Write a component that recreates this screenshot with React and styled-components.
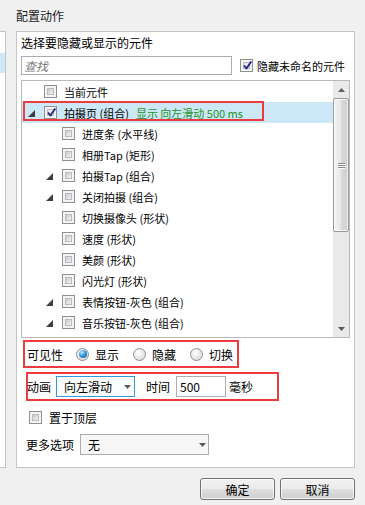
import React from 'react';
import styled, { createGlobalStyle, css } from 'styled-components';

const GlobalStyle = createGlobalStyle`
  html, body { margin: 0; padding: 0; background: #f0f0f0; }
  body {
    font-family: "Noto Sans CJK SC", "Noto Sans", "Liberation Sans", sans-serif;
    font-size: 12px;
    color: #000;
  }
  * { box-sizing: border-box; }
`;

const Page = styled.div`
  display: flex;
  width: 365px;
  height: 505px;
  overflow: hidden;
  background: #f0f0f0;
`;

const SideStrip = styled.div`
  flex: none;
  width: 6px;
  height: 437px;
  margin-top: 31px;
  background: #fff;
  border: 1px solid #c3c3c3;
  border-left: none;
  padding-top: 21px;
`;

const SideSelected = styled.div`
  height: 20px;
  background: #cde8f7;
`;

const Main = styled.div`
  flex: none;
  width: 339px;
  margin-left: 10px;
  display: flex;
  flex-direction: column;
`;

const Title = styled.div`
  height: 31px;
  display: flex;
  align-items: center;
  color: #1b1b1b;
`;

const Panel = styled.div`
  height: 437px;
  background: #fff;
  border: 1px solid #c5c5c5;
  padding: 1px 4px 0;
  display: flex;
  flex-direction: column;
`;

const Label = styled.div`
  line-height: 20px;
  height: 20px;
  white-space: nowrap;
`;

const SearchRow = styled.div`
  display: flex;
  align-items: center;
  height: 19px;
  margin-top: 3px;
`;

const SearchInput = styled.input`
  width: 211px;
  height: 19px;
  border: 1px solid #abadb3;
  padding: 0 2px;
  font: inherit;
  outline: none;
  &::placeholder {
    color: #7a7a7a;
    font-style: italic;
  }
`;

const InlineCheck = styled.label`
  display: flex;
  align-items: center;
  gap: ${p => p.$gap || 4}px;
  margin-left: ${p => p.$ml || 0}px;
  font-size: ${p => p.$size || 12}px;
  white-space: nowrap;
`;

const BoxFrame = styled.span`
  flex: none;
  position: relative;
  width: 13px;
  height: 13px;
  border: 1px solid #8e8f8f;
  background: #f4f4f4;
  padding: 2px;
  display: inline-flex;
`;

const BoxFill = styled.span`
  flex: 1;
  border: 1px solid #b8bcc1;
  background: ${p =>
    p.$checked
      ? 'linear-gradient(135deg, #e2e4e8 0%, #f3f4f5 100%)'
      : 'linear-gradient(135deg, #c6cacf 0%, #dfe1e4 55%, #f3f3f3 100%)'};
`;

const CheckMark = styled.svg`
  position: absolute;
  left: 1px;
  top: 0px;
`;

function CheckBox({ checked }) {
  return (
    <BoxFrame>
      <BoxFill $checked={checked} />
      {checked && (
        <CheckMark width="11" height="11" viewBox="0 0 11 11">
          <path d="M2 5.5 L4.4 8.5 L9.3 1.5" fill="none" stroke="#24248c" strokeWidth="1.9" strokeLinejoin="round" />
        </CheckMark>
      )}
    </BoxFrame>
  );
}

const Tree = styled.div`
  display: flex;
  width: 329px;
  height: 258px;
  margin-top: 5px;
  border: 1px solid #b9b9b9;
`;

const List = styled.div`
  flex: 1;
  overflow: hidden;
  font-size: 11px;
`;

const Row = styled.div`
  position: relative;
  height: 21px;
  display: flex;
  align-items: center;
  white-space: nowrap;
  padding-left: ${p => 6 + p.$level * 18}px;
  ${p => p.$selected && css`background: #cce8f6;`}
`;

const Expander = styled.span`
  flex: none;
  width: 16px;
  display: flex;
  align-items: center;
  padding-top: 1px;
`;

const RowText = styled.span`
  margin-left: 7px;
`;

const Extra = styled.span`
  margin-left: 7px;
  color: #23922a;
`;

const Mark = styled.span`
  position: absolute;
  left: ${p => p.$left}px;
  top: ${p => p.$top}px;
  width: ${p => p.$w}px;
  height: ${p => p.$h}px;
  border: 2px solid #ee3b3f;
  pointer-events: none;
`;

const ScrollBar = styled.div`
  flex: none;
  width: 16px;
  background: #e9e9e9;
  display: flex;
  flex-direction: column;
`;

const ScrollArrow = styled.div`
  flex: none;
  height: 17px;
  display: flex;
  align-items: center;
  justify-content: center;
`;

const Thumb = styled.div`
  flex: none;
  height: 134px;
  border: 1px solid #9a9a9a;
  border-radius: 2px;
  background: linear-gradient(90deg, #f4f4f4 0%, #e8e8e8 45%, #d8d8d8 55%, #d0d0d0 100%);
  box-shadow: inset 0 0 0 1px rgba(255, 255, 255, 0.7);
  display: flex;
  flex-direction: column;
  align-items: center;
  justify-content: center;
  gap: 1px;
`;

const Grip = styled.span`
  width: 7px;
  height: 1px;
  background: #8a8a8a;
  box-shadow: 0 1px 0 #fbfbfb;
`;

const Spacer = styled.div`
  flex: 1;
`;

const VisRow = styled.div`
  display: flex;
  align-items: center;
  width: 216px;
  height: 28px;
  margin: 2px 0 0 2px;
  padding-left: 2px;
  border: 2px solid #ee3b3f;
  white-space: nowrap;
`;

const RadioGroup = styled.div`
  display: flex;
  align-items: center;
  gap: 14px;
  margin-left: 13px;
`;

const RadioItem = styled.label`
  display: flex;
  align-items: center;
  gap: 6px;
`;

const Radio = styled.span`
  flex: none;
  width: 13px;
  height: 13px;
  border-radius: 50%;
  border: 1px solid #8e8f8f;
  background: radial-gradient(circle at 40% 35%, #ffffff 0%, #e6e6e6 55%, #cfcfcf 100%);
  display: inline-flex;
  align-items: center;
  justify-content: center;
  ${p =>
    p.$checked &&
    css`
      &::after {
        content: '';
        width: 8px;
        height: 8px;
        border-radius: 50%;
        background: radial-gradient(circle at 35% 30%, #bfe8ff 0%, #3a9ae0 45%, #0c4f8c 100%);
      }
    `}
`;

const AnimRow = styled.div`
  position: relative;
  display: flex;
  align-items: center;
  height: 29px;
  margin-top: 4px;
  padding-left: 6px;
  white-space: nowrap;
`;

const Select = styled.div`
  flex: none;
  display: flex;
  align-items: center;
  justify-content: space-between;
  width: ${p => p.$w}px;
  height: 21px;
  margin-left: ${p => p.$ml}px;
  padding: 0 ${p => p.$pr}px 0 7px;
  border: 1px solid ${p => (p.$focused ? '#3498dc' : '#acacac')};
  background: ${p => (p.$focused ? '#fbfdff' : '#f6f6f6')};
`;

const Caption = styled.span`
  margin-left: ${p => p.$ml || 0}px;
`;

const TimeInput = styled.div`
  flex: none;
  width: 50px;
  height: 21px;
  margin-left: 6px;
  border: 1px solid #abadb3;
  padding-left: 3px;
  display: flex;
  align-items: center;
  background: #fff;
`;

const PlainRow = styled.div`
  display: flex;
  align-items: center;
  height: ${p => p.$h}px;
  margin-top: ${p => p.$mt}px;
  padding-left: ${p => p.$pl}px;
  white-space: nowrap;
`;

const ButtonRow = styled.div`
  display: flex;
  justify-content: flex-end;
  gap: 5px;
  margin-top: 10px;
`;

const Button = styled.button`
  width: 75px;
  height: 22px;
  padding: 0;
  border: 1px solid #707070;
  border-radius: 3px;
  background: linear-gradient(#f2f2f2 0%, #ebebeb 48%, #dddddd 52%, #cfcfcf 100%);
  box-shadow: inset 0 0 0 1px rgba(255, 255, 255, 0.75);
  font: inherit;
  color: #000;
`;

const Tri = () => (
  <svg width="7" height="7" viewBox="0 0 7 7">
    <polygon points="7,0 7,7 0,7" fill="#3e3e3e" />
  </svg>
);

const DropArrow = () => (
  <svg width="7" height="4" viewBox="0 0 7 4">
    <polygon points="0,0 7,0 3.5,4" fill="#5a5a5a" />
  </svg>
);

const UpArrow = () => (
  <svg width="7" height="4" viewBox="0 0 7 4">
    <polygon points="0,4 7,4 3.5,0" fill="#606060" />
  </svg>
);

const rows = [
  { level: 0, label: '当前元件' },
  { level: 0, expand: true, checked: true, selected: true, label: '拍摄页 (组合)', extra: '显示 向左滑动 500 ms' },
  { level: 1, label: '进度条 (水平线)' },
  { level: 1, label: '相册Tap (矩形)' },
  { level: 1, expand: true, label: '拍摄Tap (组合)' },
  { level: 1, expand: true, label: '关闭拍摄 (组合)' },
  { level: 1, label: '切换摄像头 (形状)' },
  { level: 1, label: '速度 (形状)' },
  { level: 1, label: '美颜 (形状)' },
  { level: 1, label: '闪光灯 (形状)' },
  { level: 1, expand: true, label: '表情按钮-灰色 (组合)' },
  { level: 1, expand: true, label: '音乐按钮-灰色 (组合)' },
];

export default function App() {
  return (
    <>
      <GlobalStyle />
      <Page>
        <SideStrip>
          <SideSelected />
        </SideStrip>
        <Main>
          <Title>配置动作</Title>
          <Panel>
            <Label>选择要隐藏或显示的元件</Label>
            <SearchRow>
              <SearchInput placeholder="查找" readOnly />
              <InlineCheck $ml={8} $gap={4} $size={11}>
                <CheckBox checked />
                <span>隐藏未命名的元件</span>
              </InlineCheck>
            </SearchRow>
            <Tree>
              <List>
                {rows.map((r, i) => (
                  <Row key={i} $level={r.level} $selected={r.selected}>
                    <Expander>{r.expand && <Tri />}</Expander>
                    <CheckBox checked={r.checked} />
                    <RowText>{r.label}</RowText>
                    {r.extra && <Extra>{r.extra}</Extra>}
                    {r.selected && <Mark $left={1} $top={-1} $w={241} $h={20} />}
                  </Row>
                ))}
              </List>
              <ScrollBar>
                <ScrollArrow>
                  <UpArrow />
                </ScrollArrow>
                <Thumb>
                  <Grip />
                  <Grip />
                  <Grip />
                </Thumb>
                <Spacer />
                <ScrollArrow>
                  <DropArrow />
                </ScrollArrow>
              </ScrollBar>
            </Tree>
            <VisRow>
              <span>可见性</span>
              <RadioGroup>
                <RadioItem>
                  <Radio $checked />
                  <span>显示</span>
                </RadioItem>
                <RadioItem>
                  <Radio />
                  <span>隐藏</span>
                </RadioItem>
                <RadioItem>
                  <Radio />
                  <span>切换</span>
                </RadioItem>
              </RadioGroup>
            </VisRow>
            <AnimRow>
              <span>动画</span>
              <Select $w={79} $ml={5} $pr={3} $focused>
                <span>向左滑动</span>
                <DropArrow />
              </Select>
              <Caption $ml={11}>时间</Caption>
              <TimeInput>500</TimeInput>
              <Caption $ml={3}>毫秒</Caption>
              <Mark $left={5} $top={0} $w={253} $h={29} />
            </AnimRow>
            <PlainRow $h={20} $mt={6} $pl={8}>
              <InlineCheck $gap={7}>
                <CheckBox />
                <span>置于顶层</span>
              </InlineCheck>
            </PlainRow>
            <PlainRow $h={21} $mt={7} $pl={5}>
              <span>更多选项</span>
              <Select $w={129} $ml={6} $pr={2}>
                <span>无</span>
                <DropArrow />
              </Select>
            </PlainRow>
          </Panel>
          <ButtonRow>
            <Button>确定</Button>
            <Button>取消</Button>
          </ButtonRow>
        </Main>
      </Page>
    </>
  );
}
